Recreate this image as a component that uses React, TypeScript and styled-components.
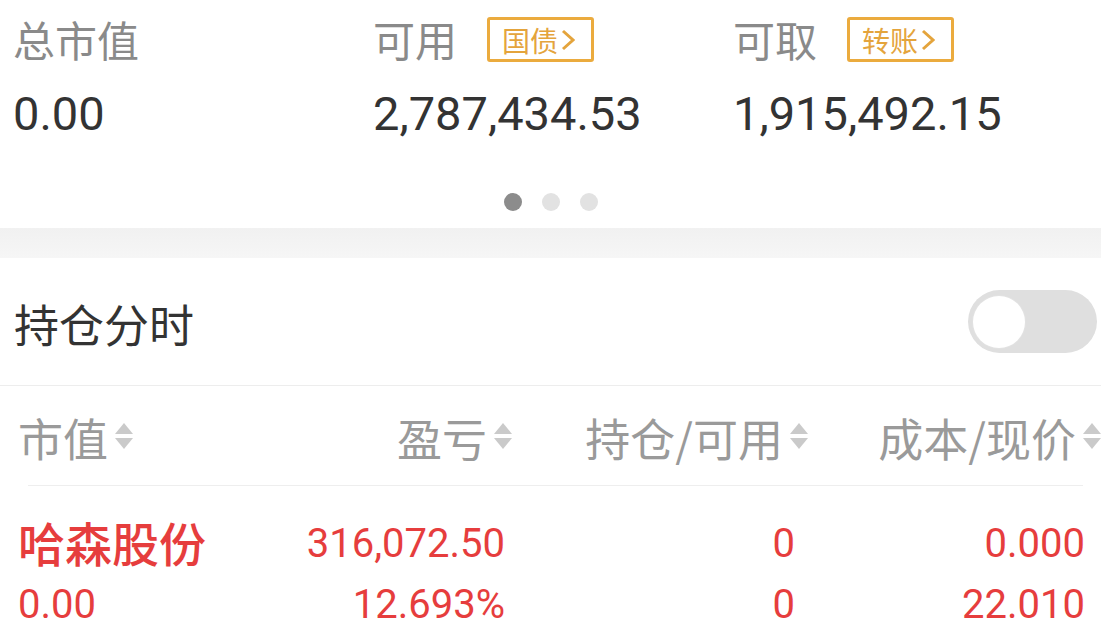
import React from 'react'
import styled, { createGlobalStyle } from 'styled-components'

const GlobalStyle = createGlobalStyle`
    html, body {
        margin: 0;
        padding: 0;
        background: #fff;
    }
    body {
        width: 1101px;
        height: 641px;
        overflow: hidden;
        font-family: "Noto Sans CJK SC", sans-serif;
    }
`

const NUM_FONT = `Roboto, "Noto Sans CJK SC", sans-serif`
const RED = '#e63d3d'

const Page = styled.div`
    display: flex;
    flex-direction: column;
`

const Summary = styled.div`
    display: grid;
    grid-template-columns: 360px 360px 360px;
    padding: 16px 0 0 13px;
`
const SummaryCell = styled.div`
    display: flex;
    flex-direction: column;
`
const LabelLine = styled.div`
    display: flex;
    align-items: center;
    height: 50px;
`
const Label = styled.span`
    font-size: 42px;
    line-height: 50px;
    color: #8a8a8a;
    margin-top: -4px;
`
const Badge = styled.span`
    display: flex;
    align-items: center;
    box-sizing: border-box;
    height: 45px;
    width: 107px;
    margin-left: 30px;
    margin-top: -3px;
    padding-left: 12px;
    gap: 3px;
    border: 3px solid #ebab3e;
    border-radius: 3px;
    color: #e4a43c;
    font-size: 28px;
    line-height: 1;
`
const Value = styled.div`
    margin-top: 22px;
    height: 51px;
    line-height: 51px;
    font-family: ${NUM_FONT};
    font-size: 47px;
    color: #333;
`

const Dots = styled.div`
    display: flex;
    justify-content: center;
    gap: 20px;
    margin-top: 54px;
`
const Dot = styled.span`
    width: 18px;
    height: 18px;
    border-radius: 50%;
    background: ${props => props.active ? '#8c8c8c' : '#e2e2e2'};
`
const Band = styled.div`
    height: 30px;
    margin-top: 17px;
    background: linear-gradient(#f1f1f1, #f6f6f6);
`

const ToggleRow = styled.div`
    display: flex;
    align-items: center;
    justify-content: space-between;
    height: 127px;
    padding: 0 4px 0 14px;
    border-bottom: 1px solid #ededed;
`
const RowTitle = styled.span`
    font-size: 45px;
    color: #333;
    margin-top: 4px;
`
const Track = styled.div`
    display: flex;
    align-items: center;
    box-sizing: border-box;
    width: 129px;
    height: 63px;
    padding-left: 5px;
    border-radius: 32px;
    background: #dfdfdf;
`
const Knob = styled.span`
    width: 52px;
    height: 52px;
    border-radius: 50%;
    background: #fff;
    box-shadow: 0 0 0 1px #e2e2e2;
`

const COLUMNS = '232px 262px 296px 293px'

const TableHead = styled.div`
    display: grid;
    grid-template-columns: ${COLUMNS};
    padding-left: 18px;
    height: 99px;
    align-items: center;
`
const HeadCell = styled.div`
    display: flex;
    align-items: center;
    justify-content: ${props => props.left ? 'flex-start' : 'flex-end'};
    gap: 7px;
    font-size: 45px;
    color: #9a9a9a;
    white-space: nowrap;
`
const HeadText = styled.span`
    margin-top: 4px;
`
const Divider = styled.div`
    height: 1px;
    margin: 0 18px 0 28px;
    background: #eeeeee;
`

const DataRow = styled.div`
    display: grid;
    grid-template-columns: ${COLUMNS};
    grid-auto-rows: 61px;
    padding: 27px 0 0 18px;
    align-items: center;
`
const Cell = styled.div`
    text-align: ${props => props.left ? 'left' : 'right'};
    padding-right: ${props => props.pr || 0}px;
    font-family: ${NUM_FONT};
    font-size: 40px;
    color: ${RED};
    white-space: nowrap;
`
const Name = styled(Cell)`
    font-family: "Noto Sans CJK SC", sans-serif;
    font-size: 47px;
    font-weight: 500;
    margin-top: -4px;
`

const Chevron = () => (
    <svg width="14" height="22" viewBox="0 0 14 22">
        <polyline points="2,2 12,11 2,20" fill="none" stroke="currentColor" strokeWidth="3" />
    </svg>
)

const SortIcon = () => (
    <svg width="18" height="26" viewBox="0 0 18 26" style={{ flexShrink: 0 }}>
        <polygon points="9,0 18,11 0,11" fill="#cacaca" />
        <polygon points="0,15 18,15 9,26" fill="#cacaca" />
    </svg>
)

const summary = [
    { label: '总市值', value: '0.00' },
    { label: '可用', value: '2,787,434.53', badge: '国债' },
    { label: '可取', value: '1,915,492.15', badge: '转账' },
]

const heads = ['市值', '盈亏', '持仓/可用', '成本/现价']

// right padding of each column so data lines up under the sort icons
const pads = [0, 7, 13, 16]

const position = {
    name: '哈森股份',
    top: ['316,072.50', '0', '0.000'],
    bottom: ['0.00', '12.693%', '0', '22.010'],
}

export default function App() {
    return <Page>
        <GlobalStyle />
        <Summary>
            {summary.map(s => <SummaryCell key={s.label}>
                <LabelLine>
                    <Label>{s.label}</Label>
                    {s.badge ? <Badge>{s.badge}<Chevron /></Badge> : null}
                </LabelLine>
                <Value>{s.value}</Value>
            </SummaryCell>)}
        </Summary>
        <Dots>
            <Dot active />
            <Dot />
            <Dot />
        </Dots>
        <Band />
        <ToggleRow>
            <RowTitle>持仓分时</RowTitle>
            <Track><Knob /></Track>
        </ToggleRow>
        <TableHead>
            {heads.map((h, i) => <HeadCell key={h} left={i === 0}>
                <HeadText>{h}</HeadText>
                <SortIcon />
            </HeadCell>)}
        </TableHead>
        <Divider />
        <DataRow>
            <Name left>{position.name}</Name>
            {position.top.map((v, i) => <Cell key={'t' + i} pr={pads[i + 1]}>{v}</Cell>)}
            {position.bottom.map((v, i) => <Cell key={'b' + i} left={i === 0} pr={pads[i]}>{v}</Cell>)}
        </DataRow>
    </Page>
}
